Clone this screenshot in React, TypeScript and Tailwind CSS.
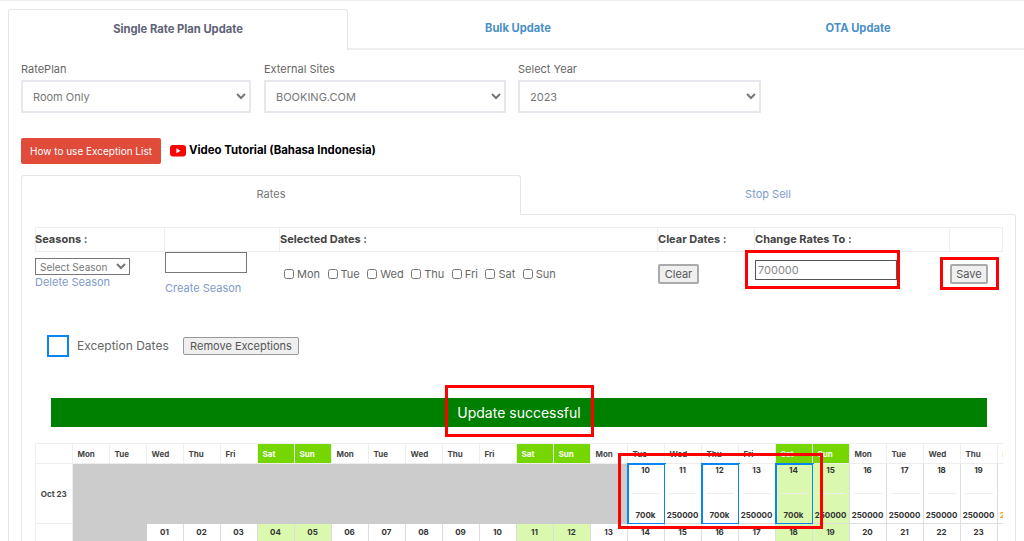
const font = "[font-family:Inter,'Liberation_Sans',sans-serif]";

const selectStyle = "h-[33px] border-2 border-[#e6e7ef] bg-white pl-[6px] text-[11px] text-[#777]";
const greyButton = "block h-[20px] border-2 border-[#aaa] rounded-[2px] bg-[#efefef] text-[11px] text-[#555]";
const headCell = "h-[25px] border-y border-r border-[#eee] flex items-center text-[11px] font-bold text-[#444]";

const dayNames = ["Mon", "Tue", "Wed", "Thu", "Fri", "Sat", "Sun"];
const columns = Array.from({ length: 26 }, (_, i) => i);
const isWeekend = (i: number) => i % 7 === 5 || i % 7 === 6;
const exceptionDays = [10, 12, 14];

function pad(n: number) {
    return n < 10 ? `0${n}` : `${n}`;
}

function OctoberCell({ col }: { col: number }) {
    const day = col - 5;
    if (day < 10) {
        return <div className="h-[60px] bg-[#cccccc]"></div>;
    }
    const isException = exceptionDays.includes(day);
    const price = isException ? "700k" : "250000";
    return <div className={`h-[60px] border-r border-b border-[#ddd] flex flex-col items-center text-[8px] font-bold text-[#333] ${isWeekend(col) ? "bg-[#daf9af]" : "bg-white"} ${isException ? "outline-2 -outline-offset-1 outline-[#0a84f0]" : ""}`}>
        <div className="h-[30px] w-[28px] border-b border-[#eee] text-center">{day}</div>
        <div className={`mt-auto pb-[2px] ${day === 20 ? "text-[#f0a030]" : ""}`}>{price}</div>
    </div>;
}

function NovemberCell({ col }: { col: number }) {
    const day = col - 1;
    if (day < 1) {
        return <div className="h-[20px] bg-[#cccccc]"></div>;
    }
    return <div className={`h-[20px] border-r border-[#ddd] text-center pt-[2px] text-[8px] font-bold text-[#333] ${isWeekend(col) ? "bg-[#daf9af]" : "bg-white"}`}>
        {pad(day)}
    </div>;
}

function Calendar() {
    return <div className="w-[968px] overflow-hidden">
        <div className="grid grid-cols-[37.5px_repeat(26,37px)] w-max">
            <div className="h-[21px] border border-[#eee]"></div>
            {columns.map((col) => (
                <div key={col} className={`h-[21px] border-t border-b border-r border-[#eee] flex items-center pl-[5px] text-[8px] font-bold ${isWeekend(col) ? "bg-[#76d600] text-white" : "text-[#444]"}`}>
                    {dayNames[col % 7]}
                </div>
            ))}
            <div className="h-[60px] border-l border-r border-b border-[#eee] flex items-center justify-center text-[8px] font-bold text-[#444]">Oct 23</div>
            {columns.map((col) => <OctoberCell key={col} col={col} />)}
            <div className="h-[20px] border-l border-r border-[#eee]"></div>
            {columns.map((col) => <NovemberCell key={col} col={col} />)}
        </div>
    </div>;
}

function App() {
    return <div className={`relative w-[1024px] h-[541px] overflow-hidden bg-white border-t border-[#eee] ${font}`}>
        <div className="flex h-[41px] mt-[8px] pl-2 w-[1040px]">
            <div className="w-[340px] border border-b-0 border-[#e6e6e6] rounded-t-[3px] flex items-center justify-center pb-[2px] text-[11.2px] font-bold text-[#5e6278]">
                Single Rate Plan Update
            </div>
            <div className="w-[340px] border-b-2 border-[#eee] flex items-center justify-center text-[11.2px] font-bold text-[#4a90c8]">
                Bulk Update
            </div>
            <div className="w-[340px] border-b-2 border-[#eee] flex items-center justify-center text-[11.2px] font-bold text-[#4a90c8]">
                OTA Update
            </div>
        </div>

        <div className="ml-2 border-l border-[#e6e6e6] pl-3 h-[500px]">
            <div className="flex pt-[11px]">
                <div className="w-[243px]">
                    <div className="h-[19px] text-[11px] text-[#666]">RatePlan</div>
                    <select className={`${selectStyle} w-[230px]`}><option>Room Only</option></select>
                </div>
                <div className="w-[254px]">
                    <div className="h-[19px] text-[11px] text-[#666]">External Sites</div>
                    <select className={`${selectStyle} w-[242px]`}><option>BOOKING.COM</option></select>
                </div>
                <div>
                    <div className="h-[19px] text-[11px] text-[#666]">Select Year</div>
                    <select className={`${selectStyle} w-[243px]`}><option>2023</option></select>
                </div>
            </div>

            <div className="flex items-center mt-[25px] h-[26px]">
                <button type="button" className="w-[140px] h-[26px] bg-[#e04b3a] rounded-[2px] text-white text-[10px]">
                    How to use Exception List
                </button>
                <svg className="ml-[9px]" width="16" height="12" viewBox="0 0 16 12">
                    <rect width="16" height="11.5" rx="3" fill="#f00" />
                    <path d="M6.4 3.2 L10.6 5.75 L6.4 8.3 Z" fill="#fff" />
                </svg>
                <span className="ml-[3px] text-[11.4px] font-bold text-black">Video Tutorial (Bahasa Indonesia)</span>
            </div>

            <div className="flex h-[40px] mt-[11px] w-[994px]">
                <div className="w-[500px] border border-b-0 border-[#e6e6e6] rounded-t-[3px] flex items-center justify-center pb-[2px] text-[11px] text-[#777]">
                    Rates
                </div>
                <div className="w-[494px] border-b border-[#e6e6e6] flex items-center justify-center text-[11px] text-[#7e9bcb]">
                    Stop Sell
                </div>
            </div>

            <div className="w-[995px] border-l border-r border-[#e6e6e6] pl-[13px] pt-[12px] h-[400px]">
                <div className="grid grid-cols-[130px_115px_378px_97px_195px_53px] w-[968px]">
                    <div className={`${headCell} border-l`}><span className="-ml-px">Seasons :</span></div>
                    <div className={headCell}></div>
                    <div className={headCell}>Selected Dates :</div>
                    <div className={headCell}>Clear Dates :</div>
                    <div className={headCell}>Change Rates To :</div>
                    <div className={headCell}></div>

                    <div className="pt-[6px]">
                        <select className="block w-[95px] h-[17px] border border-[#777] text-[10px] text-[#777]"><option>Select Season</option></select>
                        <div className="text-[11px] leading-[14px] text-[#7e9bcb]">Delete Season</div>
                    </div>
                    <div>
                        <input type="text" className="block w-[82px] h-[21px] border border-[#777]" />
                        <div className="mt-[8px] text-[11px] leading-[14px] text-[#7e9bcb]">Create Season</div>
                    </div>
                    <div className="flex items-start gap-[7.5px] pt-[14px] pl-[4px] text-[11px] text-[#666]">
                        {dayNames.map((name) => (
                            <label key={name} className="flex items-center gap-[3px]">
                                <input type="checkbox" className="m-0 w-[10px] h-[10px]" />
                                {name}
                            </label>
                        ))}
                    </div>
                    <div className="pt-[12px]">
                        <button type="button" className={`${greyButton} w-[41px]`}>Clear</button>
                    </div>
                    <div className="pt-[8px]">
                        <input type="text" readOnly value="700000" className="block w-[142px] h-[20px] border border-[#555] pl-[2px] text-[11px] text-[#888]" />
                    </div>
                    <div className="pt-[12px]">
                        <button type="button" className={`${greyButton} w-[38px]`}>Save</button>
                    </div>
                </div>

                <div className="flex items-center h-[21px] mt-[40px] ml-[12px]">
                    <div className="w-[22px] h-[22px] border-2 border-[#0a84f0]"></div>
                    <span className="ml-[8px] w-[106px] text-[12px] text-[#666]">Exception Dates</span>
                    <button type="button" className="w-[116px] h-[18px] border border-[#999] rounded-[2px] bg-[#efefef] text-[11px] text-[#555]">
                        Remove Exceptions
                    </button>
                </div>

                <div className="w-[936px] h-[29px] ml-[16px] mt-[42px] bg-[#008000] flex items-center justify-center text-[14px] text-white">
                    Update successful
                </div>

                <div className="mt-[16px]">
                    <Calendar />
                </div>
            </div>
        </div>

        <div className="absolute left-[745px] top-[249px] w-[155px] h-[39px] border-[3px] border-[#f00]"></div>
        <div className="absolute left-[940px] top-[256px] w-[59px] h-[33px] border-[3px] border-[#f00]"></div>
        <div className="absolute left-[445px] top-[384px] w-[149px] h-[52px] border-[3px] border-[#f00]"></div>
        <div className="absolute left-[618px] top-[452px] w-[205px] h-[76px] border-[3px] border-[#f00]"></div>
    </div>;
}

export default App;
